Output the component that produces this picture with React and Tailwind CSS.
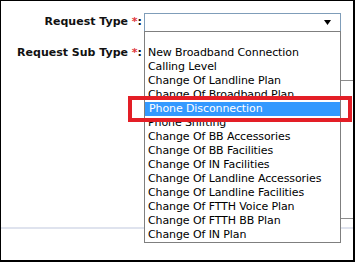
const subTypes = [
  "",
  "New Broadband Connection",
  "Calling Level",
  "Change Of Landline Plan",
  "Change Of Broadband Plan",
  "Phone Disconnection",
  "Phone Shifting",
  "Change Of BB Accessories",
  "Change Of BB Facilities",
  "Change Of IN Facilities",
  "Change Of Landline Accessories",
  "Change Of Landline Facilities",
  "Change Of FTTH Voice Plan",
  "Change Of FTTH BB Plan",
  "Change Of IN Plan",
];

function Label({ text }) {
  return (
    <div className="w-[141px] shrink-0 text-right text-[11px] font-bold text-[#111]">
      {text} <span className="text-[#e0353b]">*</span>:
    </div>
  );
}

export default function App() {
  const selected = "Phone Disconnection";

  return (
    <div
      className="relative h-[262px] w-[355px] overflow-hidden border-t border-l border-r-2 border-b-2 border-black bg-white"
      style={{ fontFamily: "'DejaVu Sans', Verdana, sans-serif" }}
    >
      <div className="flex items-center gap-[2px] pt-[12px]">
        <Label text="Request Type" />
        <div className="flex h-[19px] w-[197px] items-center justify-end border border-[#7f9db9] bg-white pr-[9px]">
          <svg width="7" height="5" viewBox="0 0 7 5">
            <path d="M0 0h7L3.5 5z" fill="#000" />
          </svg>
        </div>
      </div>

      <div className="flex items-center pt-[13px]">
        <Label text="Request Sub Type" />
      </div>

      <div className="ml-[200px] mt-[18px] h-[139px] border-y border-l border-[#8d8d8d]" />
      <div className="mt-[8px] h-[2px] bg-[#dfe3ee]" />

      <ul className="absolute left-[143px] top-[30px] w-[197px] border border-[#7f7f7f] bg-white text-[11px] leading-[14px] tracking-[-0.1px] text-black">
        {subTypes.map((t, i) => (
          <li
            key={i}
            className={
              t === selected
                ? "h-[14px] whitespace-nowrap bg-[#3399ff] pl-[4px] text-white"
                : "h-[14px] whitespace-nowrap pl-[3px]"
            }
          >
            {t}
          </li>
        ))}
      </ul>

      <div className="absolute left-[127px] top-[95px] h-[26px] w-[224px] border-[4px] border-[#e31e26]" />
    </div>
  );
}
